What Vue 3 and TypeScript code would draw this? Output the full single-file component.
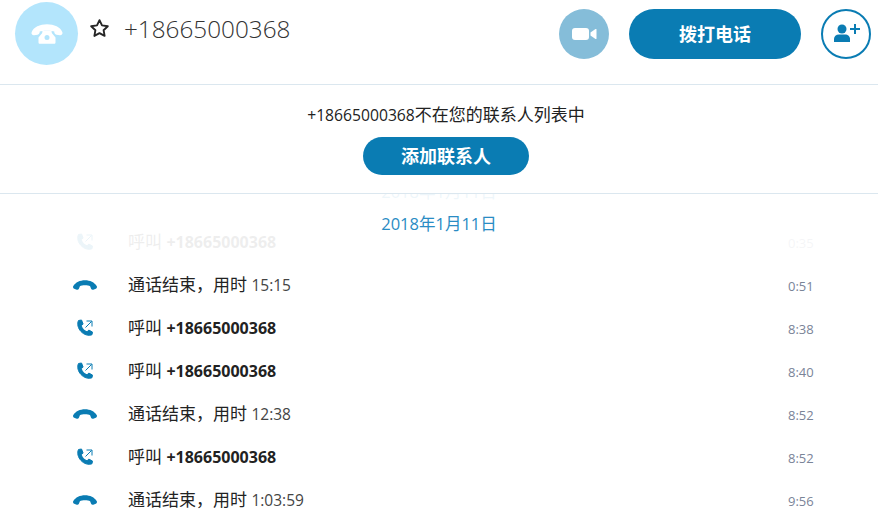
<script setup lang="ts">
type Row = { kind: 'call' | 'end'; label: string; value: string; time: string }

const phone = '+18665000368'

const rows: Row[] = [
    { kind: 'call', label: '呼叫', value: phone, time: '0:35' },
    { kind: 'end', label: '通话结束，用时', value: '15:15', time: '0:51' },
    { kind: 'call', label: '呼叫', value: phone, time: '8:38' },
    { kind: 'call', label: '呼叫', value: phone, time: '8:40' },
    { kind: 'end', label: '通话结束，用时', value: '12:38', time: '8:52' },
    { kind: 'call', label: '呼叫', value: phone, time: '8:52' },
    { kind: 'end', label: '通话结束，用时', value: '1:03:59', time: '9:56' },
]
</script>

<template>
    <div class="page">
        <header class="header">
            <div class="avatar">
                <svg width="32" height="20" viewBox="0 0 32 20">
                    <path fill="#fff" d="M.6 8.2C2.4 3 9 .2 16 .2s13.6 2.800 15.400 8c.5 1.700-.7 3.200-2.500 3l-3.500-.5c-1.500-.3-2.200-1.500-2.100-3.200-2.500-1.100-12.100-1.100-14.600 0 .1 1.700-.6 2.900-2.100 3.200l-3.500.5c-1.800.2-3-1.300-2.500-3z" />
                    <path fill="#fff" fill-rule="evenodd" d="M11.500 6.800h9l.3 2.200 3.700 4.600v4.900c0 .8-.5 1.300-1.300 1.300H8.800c-.8 0-1.300-.5-1.300-1.300v-4.900l3.700-4.600zM16 11a2.500 2.500 0 1 0 0 5 2.500 2.500 0 0 0 0-5z" />
                </svg>
            </div>
            <svg class="star" width="19" height="19" viewBox="0 0 19 19">
                <path fill="none" stroke="#262626" stroke-width="1.900" stroke-linejoin="round" d="M9.500 1.200l2.500 5.200 5.800.8-4.200 4 1 5.700-5.100-2.800-5.100 2.800 1-5.700-4.200-4 5.800-.8z" />
            </svg>
            <h1 class="title">{{ phone }}</h1>
            <div class="actions">
                <button class="round video">
                    <svg width="25" height="14" viewBox="0 0 25 14">
                        <rect x="0" y="1" width="17" height="12" rx="3" fill="#fff" />
                        <path fill="#fff" d="M18.500 5.500l5-3.500c.5-.3 1 0 1 .5v9c0 .5-.5.8-1 .5l-5-3.500z" />
                    </svg>
                </button>
                <button class="pill call">拨打电话</button>
                <button class="round add">
                    <svg width="30" height="20" viewBox="0 0 30 20">
                        <circle cx="11" cy="5" r="4.500" fill="#0a7cb3" />
                        <path fill="#0a7cb3" d="M3 18v-3c0-2.500 2-4.500 5-4.500h6c3 0 5 2 5 4.500v3z" />
                        <path fill="none" stroke="#0a7cb3" stroke-width="2" d="M24 0v10M19 5h10" />
                    </svg>
                </button>
            </div>
        </header>

        <section class="notice">
            <p class="notice-text"><span class="notice-num">{{ phone }}</span>不在您的联系人列表中</p>
            <button class="pill add-contact">添加联系人</button>
        </section>

        <main class="timeline">
            <div class="date ghost">2018年1月11日</div>
            <div v-for="(row, i) in rows" :key="i" class="row">
                <span class="icon">
                    <svg v-if="row.kind === 'call'" class="icon-call" width="18" height="18" viewBox="0 0 18 18">
                        <path fill="#0a7cb3" stroke="#0a7cb3" stroke-width="1" stroke-linejoin="round" d="M2.500 1.500L5.500 1l1.600 4-1.800 1.800c.8 2.700 2.900 5 5.700 6l1.900-1.700 3.600 2-.5 2.600c-3.400 1.500-8 .1-11-3.200C2 9.400.9 4.800 2.500 1.500z" />
                        <path fill="none" stroke="#0a7cb3" stroke-width="1" d="M9.500 8.500l6-6M10.500 2h5.500v5.500" />
                    </svg>
                    <svg v-else width="24" height="10" viewBox="0 0 24 10">
                        <path fill="#0a7cb3" d="M.2 6.200C2.500 2.200 7 .2 12 .2s9.500 2 11.800 6c.5 1-.1 2-1 2.500l-2.500 1c-.9.300-1.800 0-2.200-1l-1-2.500c-1.900-1.200-8.300-1.200-10.200 0l-1 2.500c-.4 1-1.300 1.300-2.200 1l-2.500-1c-.9-.5-1.500-1.500-1-2.500z" />
                    </svg>
                </span>
                <span class="text">
                    {{ row.label }}
                    <b v-if="row.kind === 'call'">{{ row.value }}</b>
                    <span v-else class="duration">{{ row.value }}</span>
                </span>
                <span class="time">{{ row.time }}</span>
            </div>
            <div class="fade"></div>
            <div class="date current">2018年1月11日</div>
        </main>
    </div>
</template>

<style>
html,
body {
    margin: 0;
    background: #fff;
}
</style>

<style scoped>
.page {
    width: 878px;
    height: 524px;
    overflow: hidden;
    display: flex;
    flex-direction: column;
    font-family: "Open Sans", "Noto Sans CJK SC", sans-serif;
    color: #222;
}

.header {
    box-sizing: border-box;
    height: 85px;
    flex: none;
    display: flex;
    align-items: flex-start;
    padding: 2px 7px 0 15px;
    border-bottom: 1px solid #dbe7ef;
}

.avatar {
    width: 63px;
    height: 63px;
    border-radius: 50%;
    background: #b3e5fc;
    display: flex;
    align-items: center;
    justify-content: center;
    flex: none;
}

.star {
    margin: 17px 0 0 12px;
    flex: none;
}

.title {
    margin: 9px 0 0 15px;
    font-size: 24.300px;
    line-height: 36px;
    font-weight: 300;
    color: #333;
}

.actions {
    margin: 7px 0 0 auto;
    display: flex;
    gap: 20px;
}

button {
    border: none;
    padding: 0;
    font: inherit;
    cursor: pointer;
    display: flex;
    align-items: center;
    justify-content: center;
}

.round {
    box-sizing: border-box;
    width: 50px;
    height: 50px;
    border-radius: 50%;
}

.video {
    background: #85bdd9;
}

.add {
    background: #fff;
    border: 2px solid #0a7cb3;
}

.pill {
    background: #0a7cb3;
    color: #fff;
    font-weight: 700;
    font-size: 18px;
    padding-bottom: 2px;
}

.call {
    width: 172px;
    height: 50px;
    border-radius: 25px;
}

.notice {
    box-sizing: border-box;
    height: 109px;
    flex: none;
    display: flex;
    flex-direction: column;
    align-items: center;
    padding: 19px 0 0 14px;
    border-bottom: 1px solid #dbe7ef;
}

.notice-text {
    margin: 0 0 11px;
    height: 22px;
    font-size: 17px;
    line-height: 22px;
}

.notice-num {
    font-size: 15.700px;
}

.add-contact {
    width: 166px;
    height: 38px;
    border-radius: 19px;
}

.timeline {
    flex: 1;
    position: relative;
    overflow: hidden;
}

.date {
    text-align: center;
    font-size: 16.500px;
    line-height: 22px;
    color: #2a8cc4;
}

.ghost {
    margin: -13px 0 17px;
}

.current {
    position: absolute;
    top: 19px;
    left: 0;
    right: 0;
}

.row {
    height: 43px;
    display: flex;
    align-items: center;
    font-size: 17px;
}

.icon {
    width: 48px;
    margin-left: 73px;
    margin-right: 7px;
    flex: none;
    display: flex;
    align-items: center;
}

.icon-call {
    margin-left: 3px;
}

.text {
    flex: 1;
    margin-bottom: 2px;
}

.text b {
    font-size: 16px;
}

.duration {
    font-size: 15.500px;
    color: #444;
}

.time {
    width: 90px;
    flex: none;
    margin-top: 2px;
    font-size: 13px;
    color: #7a8498;
}

.fade {
    position: absolute;
    top: 0;
    left: 0;
    right: 0;
    height: 70px;
    background: linear-gradient(to bottom, rgba(255, 255, 255, 0.92) 0, rgba(255, 255, 255, 0.92) 62px, rgba(255, 255, 255, 0) 70px);
}
</style>
